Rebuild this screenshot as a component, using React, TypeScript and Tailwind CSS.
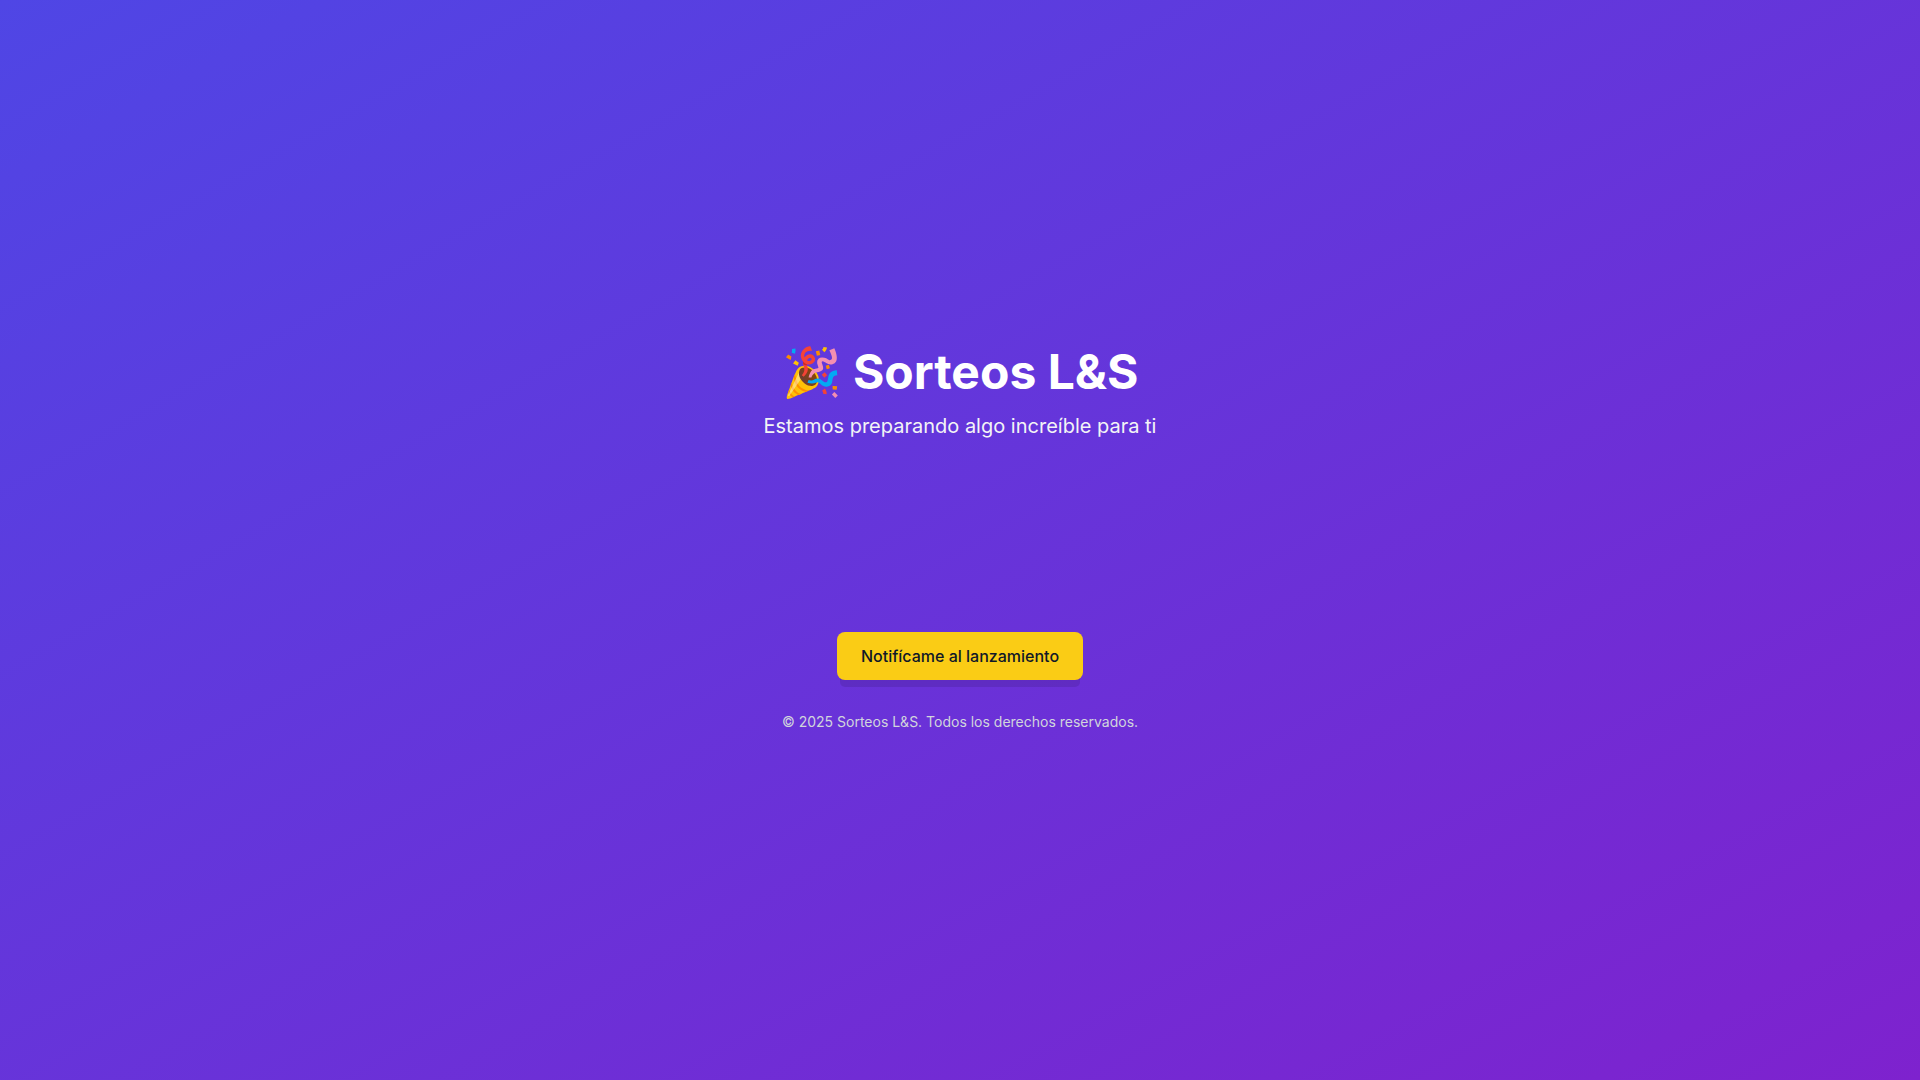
export default function App() {
  return (
    <main className="flex min-h-screen flex-col items-center justify-center bg-linear-to-br/srgb from-[#4f46e5] to-[#7e22ce] px-4 font-['Inter',sans-serif] text-white">
      <div className="text-center">
        <h1 className="mb-4 text-5xl font-bold">🎉 Sorteos L&amp;S</h1>
        <p className="text-xl text-gray-100">Estamos preparando algo increíble para ti</p>
      </div>

      <div className="my-6 h-36" />

      <button
        type="button"
        className="rounded-lg bg-[#facc15] px-6 py-3 font-medium text-gray-900 shadow-[0_10px_0_-3px_rgb(0_0_0/0.1)] hover:bg-yellow-300"
      >
        Notifícame al lanzamiento
      </button>

      <p className="mt-8 text-sm text-gray-300">© 2025 Sorteos L&amp;S. Todos los derechos reservados.</p>
    </main>
  );
}
